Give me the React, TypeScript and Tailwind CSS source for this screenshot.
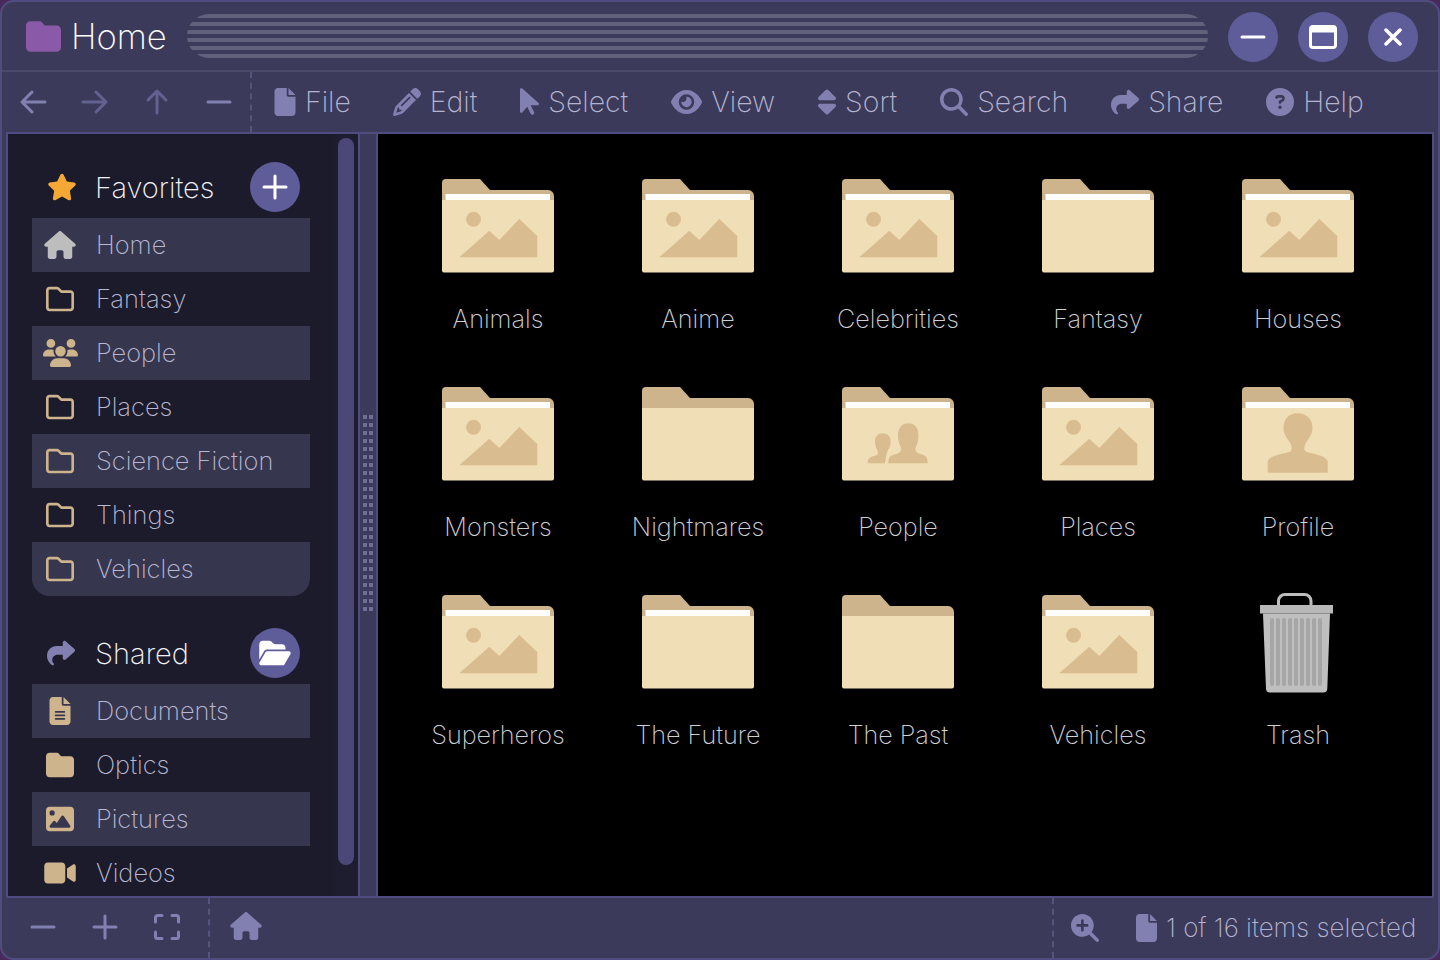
import type { ReactNode } from 'react';
import {
  FaArrowPointer,
  FaCircleQuestion,
  FaEye,
  FaFile,
  FaFileLines,
  FaFolder,
  FaFolderOpen,
  FaHouse,
  FaImage,
  FaMagnifyingGlass,
  FaMagnifyingGlassPlus,
  FaPencil,
  FaRegFolder,
  FaShare,
  FaSort,
  FaStar,
  FaUsers,
  FaVideo,
} from 'react-icons/fa6';

type Art = 'scene' | 'plain' | 'empty' | 'people' | 'profile' | 'trash';

const menu = [
  { label: 'File', icon: <FaFile className="w-[22px] h-[28px]" /> },
  { label: 'Edit', icon: <FaPencil className="w-[28px] h-[28px] -ml-[1px]" /> },
  { label: 'Select', icon: <FaArrowPointer className="w-[19px] h-[31px]" /> },
  { label: 'View', icon: <FaEye className="w-[31px] h-[28px]" /> },
  { label: 'Sort', icon: <FaSort className="w-[18px] h-[30px]" /> },
  { label: 'Search', icon: <FaMagnifyingGlass className="w-[28px] h-[28px]" /> },
  { label: 'Share', icon: <FaShare className="w-[28px] h-[28px]" /> },
  { label: 'Help', icon: <FaCircleQuestion className="w-[28px] h-[28px]" /> },
];

const folderIcon = <FaRegFolder className="w-[28px] h-[28px] text-[#cdb48c]" />;

const favorites = [
  { label: 'Home', icon: <FaHouse className="w-[32px] h-[28px] text-[#bdbdbd]" /> },
  { label: 'Fantasy', icon: folderIcon },
  { label: 'People', icon: <FaUsers className="w-[35px] h-[28px] text-[#cdb48c]" /> },
  { label: 'Places', icon: folderIcon },
  { label: 'Science Fiction', icon: folderIcon },
  { label: 'Things', icon: folderIcon },
  { label: 'Vehicles', icon: folderIcon },
];

const shared = [
  { label: 'Documents', icon: <FaFileLines className="w-[22px] h-[28px] text-[#cdb48c]" /> },
  { label: 'Optics', icon: <FaFolder className="w-[28px] h-[28px] text-[#cdb48c]" /> },
  { label: 'Pictures', icon: <FaImage className="w-[28px] h-[28px] text-[#cdb48c]" /> },
  { label: 'Videos', icon: <FaVideo className="w-[32px] h-[28px] text-[#cdb48c]" /> },
];

const files: { name: string; art: Art }[] = [
  { name: 'Animals', art: 'scene' },
  { name: 'Anime', art: 'scene' },
  { name: 'Celebrities', art: 'scene' },
  { name: 'Fantasy', art: 'plain' },
  { name: 'Houses', art: 'scene' },
  { name: 'Monsters', art: 'scene' },
  { name: 'Nightmares', art: 'empty' },
  { name: 'People', art: 'people' },
  { name: 'Places', art: 'scene' },
  { name: 'Profile', art: 'profile' },
  { name: 'Superheros', art: 'scene' },
  { name: 'The Future', art: 'plain' },
  { name: 'The Past', art: 'empty' },
  { name: 'Vehicles', art: 'scene' },
  { name: 'Trash', art: 'trash' },
];

function Stroke({ d, className }: { d: string; className: string }) {
  return (
    <svg viewBox="0 0 28 28" className={`w-7 h-7 ${className}`} fill="none" stroke="currentColor" strokeWidth="3" strokeLinecap="round" strokeLinejoin="round">
      <path d={d} />
    </svg>
  );
}

function FolderArt({ art }: { art: Art }) {
  if (art === 'trash') {
    return (
      <svg viewBox="0 0 112 96" className="w-[112px] h-[96px] overflow-visible">
        <path d="M36.5 11V7a6.5 6.5 0 0 1 6.5-6.5h19.500a6.500 6.500 0 0 1 6.500 6.500v4" fill="none" stroke="#bdbdbd" strokeWidth="3" />
        <rect x="18" y="11" width="73" height="8.500" fill="#b8b8b8" />
        <path d="M21 19.500h67l-2.700 75a4 4 0 0 1-4 4H28a4 4 0 0 1-4-4z" fill="#bfbfbf" />
        {[28, 34, 40, 46, 52, 58, 64, 70, 76].map((x) => (
          <rect key={x} x={x} y="24" width="4" height="68" rx="2" fill="#a6a6a6" />
        ))}
      </svg>
    );
  }
  return (
    <svg viewBox="0 0 112 96" className="w-[112px] h-[96px]">
      <path d="M0 24V5a4 4 0 0 1 4-4h34l10 11h58a6 6 0 0 1 6 6v8H0z" fill="#cdb48c" />
      {art !== 'empty' && <rect x="3.500" y="16" width="104.500" height="6" fill="#ffffff" />}
      <path d="M0 22h112v70.500a2 2 0 0 1-2 2H2a2 2 0 0 1-2-2z" fill="#f0dfb6" />
      {art === 'scene' && (
        <g fill="#d9bd90">
          <circle cx="31.500" cy="41.300" r="7.500" />
          <path d="M17.300 79.300L47.300 52.700L57.300 62L77.300 41L95.300 58V79.300z" />
        </g>
      )}
      {art === 'people' && (
        <g fill="#d9bd90">
          <path d="M46.300 77.300C46.300 71 48 69.500 54 68C59 66.500 60 64 58.500 60.500C56.500 56.500 56 53 56 49C56 42 60 37.300 66.300 37.300C72.500 37.300 76.500 42 76.500 49C76.500 53 76 56.500 74 60.500C72.500 64 73.500 66.500 78.500 68C84 69.500 85.700 71 85.700 77.300z" />
          <path d="M25.700 77.300C25.700 72.500 27.500 71 32 70C36 69 36.500 67.500 35.500 65C33.800 61.500 33 59 33 55.500C33 50.500 36 47.300 40.800 47.300C45.500 47.300 48.700 50.500 48.700 55.500C48.700 59 47.500 61.500 46 64C44 67.500 44 72 43 77.300z" />
        </g>
      )}
      {art === 'profile' && (
        <path
          d="M25.700 86.700V76C25.700 70 40 68 47 66C51 64.500 50 60 47.500 56C43 50 41.500 46 41.500 42C41.500 33 47 27.300 55.700 27.300C64.400 27.300 70.500 33 70.500 42C70.500 46 69 50 64.500 56C62 60 61 64.500 65 66C72 68 85.700 70 85.700 76V86.700z"
          fill="#d9bd90"
        />
      )}
    </svg>
  );
}

function WindowButton({ children }: { children: ReactNode }) {
  return <button className="w-[50px] h-[50px] rounded-full bg-[#5f5d99] flex items-center justify-center text-white">{children}</button>;
}

function SideHeader({ label, icon, button }: { label: string; icon: ReactNode; button: ReactNode }) {
  return (
    <div className="flex items-center h-[50px] mb-[6px] pr-[10px]">
      <div className="w-[60px] flex justify-center">{icon}</div>
      <span className="flex-1 text-[29px] font-[250] text-[#f2f2f7] pl-[3px] pt-[2px]">{label}</span>
      <button className="w-[50px] h-[50px] rounded-full bg-[#5f5d99] flex items-center justify-center text-white">{button}</button>
    </div>
  );
}

function SideRows({ rows, rounded }: { rows: { label: string; icon: ReactNode }[]; rounded?: boolean }) {
  return (
    <div className="flex flex-col">
      {rows.map((row, i) => (
        <div
          key={row.label}
          className={`flex items-center h-[54px] shrink-0 ${i % 2 === 0 ? 'bg-[#37364f]' : ''} ${rounded && i === rows.length - 1 ? 'rounded-b-[18px]' : ''}`}
        >
          <div className="w-[56px] flex justify-center">{row.icon}</div>
          <span className="pl-[8px] text-[25.4px] font-[250] text-[#b9b8d2]">{row.label}</span>
        </div>
      ))}
    </div>
  );
}

export default function App() {
  return (
    <div className="w-[1440px] h-[960px] bg-[#4a2a5c] overflow-hidden [font-family:Inter,sans-serif]">
      <div className="w-full h-full rounded-[14px] border-2 border-[#4f4c80] bg-[#3b3a5a] flex flex-col overflow-hidden">
        {/* title bar */}
        <div className="h-[70px] shrink-0 border-b-2 border-[#4b4a6b] flex items-center pl-[24px] pr-[20px]">
          <FaFolder className="w-[35px] h-[35px] text-[#8a5aa8]" />
          <span className="ml-[10px] w-[94px] text-[34.6px] font-[250] text-white leading-none">Home</span>
          <div className="ml-[22px] flex-1 h-[44px] rounded-full overflow-hidden flex flex-col gap-1">
            {[0, 1, 2, 3, 4, 5].map((n) => (
              <div key={n} className="h-1 shrink-0 bg-[#62617b]" />
            ))}
          </div>
          <div className="ml-[20px] mt-[2px] flex gap-5">
            <WindowButton>
              <Stroke d="M3 14H25" className="" />
            </WindowButton>
            <WindowButton>
              <svg viewBox="0 0 28 24" className="w-7 h-6">
                <rect x="1.500" y="1.500" width="25" height="21" rx="2.500" fill="none" stroke="currentColor" strokeWidth="3" />
                <rect x="1.500" y="1.500" width="25" height="6" fill="currentColor" />
              </svg>
            </WindowButton>
            <WindowButton>
              <svg viewBox="0 0 18 18" className="w-[18px] h-[18px]" fill="none" stroke="currentColor" strokeWidth="3.500" strokeLinecap="round">
                <path d="M2 2L16 16M16 2L2 16" />
              </svg>
            </WindowButton>
          </div>
        </div>

        {/* toolbar */}
        <div className="h-[60px] shrink-0 flex items-center">
          <div className="w-[250px] h-full shrink-0 border-r-2 border-dashed border-[#55547f] flex items-center pl-[17px] gap-[34px]">
            <Stroke d="M3 14H26M13 4L3 14L13 24" className="text-[#8280b0]" />
            <Stroke d="M2 14H25M15 4L25 14L15 24" className="text-[#62618f]" />
            <Stroke d="M14 3V25M5 12L14 3L23 12" className="text-[#62618f]" />
            <Stroke d="M3 14H25" className="text-[#8280b0]" />
          </div>
          <div className="flex items-center pl-[22px] gap-[43px] text-[28.4px] font-[250] text-[#b5b4d0]">
            {menu.map((item) => (
              <div key={item.label} className="flex items-center gap-[9px]">
                <span className="text-[#8280b0]">{item.icon}</span>
                <span>{item.label}</span>
              </div>
            ))}
          </div>
        </div>

        {/* panes */}
        <div className="flex-1 min-h-0 mx-1 border-2 border-[#4f4c80] flex">
          <aside className="w-[350px] shrink-0 bg-[#1c1b2b] flex overflow-hidden">
            <div className="w-[326px] shrink-0 pt-[28px] pl-[24px] pr-[24px] overflow-hidden">
              <SideHeader label="Favorites" icon={<FaStar className="w-[30px] h-[28px] text-[#f5a833]" />} button={<Stroke d="M14 3V25M3 14H25" className="" />} />
              <SideRows rows={favorites} rounded />
              <div className="h-[32px]" />
              <SideHeader label="Shared" icon={<FaShare className="w-[28px] h-[28px] text-[#8280b0] -ml-[2px]" />} button={<FaFolderOpen className="w-8 h-7" />} />
              <SideRows rows={shared} />
            </div>
            <div className="flex-1 bg-[#1e1d2f] pl-[4px] pt-[4px]">
              <div className="w-4 h-[727px] rounded-full bg-[#4b4878]" />
            </div>
          </aside>
          <div className="w-[20px] shrink-0 border-x-2 border-[#4f4c80] bg-[#3b3a5a] flex items-center justify-center pb-[4px]">
            <div className="grid grid-cols-2 gap-x-[2px] gap-y-1">
              {Array.from({ length: 50 }, (_, i) => (
                <div key={i} className="w-1 h-1 bg-[#6f6e97]" />
              ))}
            </div>
          </div>
          <main className="flex-1 bg-black pl-[20px] pt-[44px]">
            <div className="grid grid-cols-[repeat(5,200px)] auto-rows-[208px]">
              {files.map((file) => (
                <div key={file.name} className="flex flex-col items-center">
                  <FolderArt art={file.art} />
                  <span className="mt-[29px] text-[25.2px] leading-[32px] font-[250] text-[#cfcfd6]">{file.name}</span>
                </div>
              ))}
            </div>
          </main>
        </div>

        {/* status bar */}
        <div className="h-[60px] shrink-0 flex items-center text-[#8280b0]">
          <div className="w-[208px] h-full shrink-0 border-r-2 border-dashed border-[#55547f] flex items-center pl-[27px] gap-[34px] pb-[2px]">
            <Stroke d="M3 14H25" className="" />
            <Stroke d="M14 3V25M3 14H25" className="" />
            <Stroke d="M2.500 9V4.500a2 2 0 0 1 2-2H9M19 2.500h4.500a2 2 0 0 1 2 2V9M25.500 19v4.500a2 2 0 0 1-2 2H19M9 25.500H4.500a2 2 0 0 1-2-2V19" className="" />
          </div>
          <FaHouse className="ml-[20px] -mt-1 w-[32px] h-[28px]" />
          <div className="ml-auto w-[386px] h-full shrink-0 border-l-2 border-dashed border-[#55547f] flex items-center pl-[17px]">
            <FaMagnifyingGlassPlus className="w-[28px] h-[28px]" />
            <FaFile className="ml-[37px] w-[21px] h-[28px]" />
            <span className="ml-[9px] text-[25.9px] font-[250] text-[#b5b4d0] whitespace-nowrap">1 of 16 items selected</span>
          </div>
        </div>
      </div>
    </div>
  );
}
